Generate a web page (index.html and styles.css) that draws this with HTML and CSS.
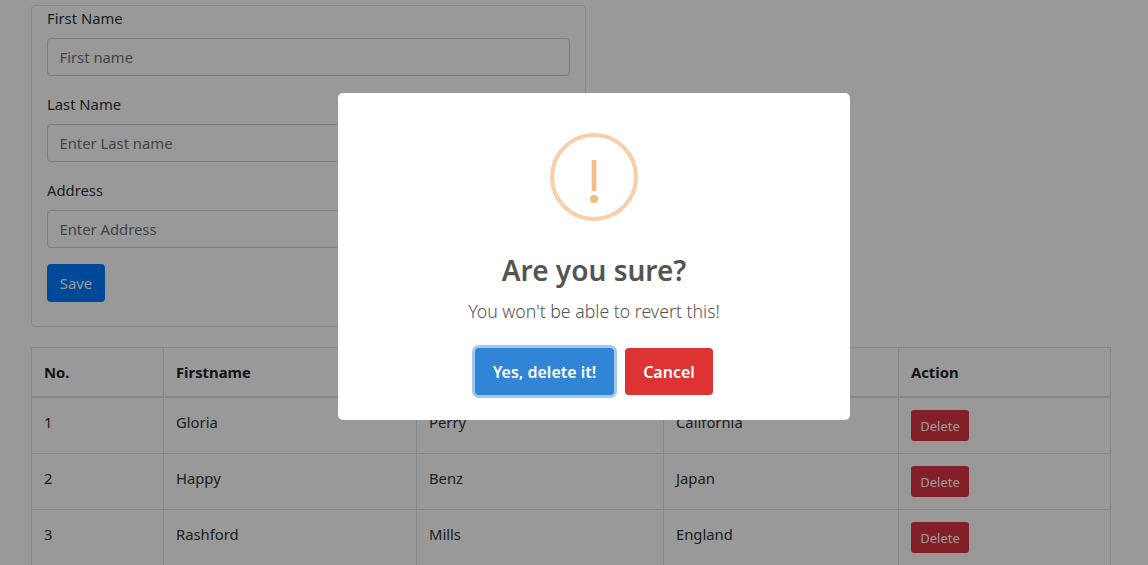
FILE: index.html
```html
<!DOCTYPE html>
<html lang="en">
<head>
<meta charset="utf-8">
<title>Users</title>
<link rel="stylesheet" href="styles.css">
</head>
<body>
<main class="page">
  <form class="card">
    <div class="field">
      <label class="field-label">First Name</label>
      <input class="field-input" placeholder="First name">
    </div>
    <div class="field">
      <label class="field-label">Last Name</label>
      <input class="field-input" placeholder="Enter Last name">
    </div>
    <div class="field">
      <label class="field-label">Address</label>
      <input class="field-input" placeholder="Enter Address">
    </div>
    <button type="button" class="btn-save">Save</button>
  </form>
  <table class="users">
    <colgroup>
      <col class="col-no"><col class="col-first"><col class="col-last"><col class="col-address"><col>
    </colgroup>
    <thead>
      <tr><th>No.</th><th>Firstname</th><th aria-label="Last name"></th><th aria-label="Address"></th><th>Action</th></tr>
    </thead>
    <tbody>
      <tr><td>1</td><td>Gloria</td><td>Perry</td><td>California</td><td><button type="button" class="btn-delete">Delete</button></td></tr>
      <tr><td>2</td><td>Happy</td><td>Benz</td><td>Japan</td><td><button type="button" class="btn-delete">Delete</button></td></tr>
      <tr><td>3</td><td>Rashford</td><td>Mills</td><td>England</td><td><button type="button" class="btn-delete">Delete</button></td></tr>
    </tbody>
  </table>
</main>
<div class="overlay">
  <div class="modal" role="dialog">
    <svg class="warn-icon" width="88" height="88" viewBox="0 0 88 88" aria-hidden="true">
      <circle cx="44" cy="44" r="42" fill="none" stroke="#facea8" stroke-width="4"/>
      <rect x="41.7" y="27" width="4.6" height="31" fill="#f8bb86"/>
      <circle cx="44" cy="66" r="4" fill="#f8bb86"/>
    </svg>
    <h2 class="modal-title">Are you sure?</h2>
    <p class="modal-text">You won't be able to revert this!</p>
    <div class="modal-actions">
      <button type="button" class="btn-confirm">Yes, delete it!</button>
      <button type="button" class="btn-cancel">Cancel</button>
    </div>
  </div>
</div>
</body>
</html>
```
FILE: styles.css
```css
* { box-sizing: border-box; }
html, body { height: 100%; overflow: hidden; }
body {
  margin: 0;
  background: #fff;
  color: #2f3438;
  font-family: "Noto Sans", "Open Sans", sans-serif;
  font-size: 14.8px;
  line-height: 24px;
}
.page { padding: 5px 37px 0 31px; }
.card {
  width: 555px;
  height: 322px;
  border: 1px solid #dee2e6;
  border-radius: 4px;
  padding: 0 15px;
}
.field { margin-bottom: 16px; }
.field-label { display: block; height: 24px; margin-bottom: 8px; }
.field-input {
  display: block;
  width: 100%;
  height: 38px;
  padding: 6px 12px 6px 11.5px;
  border: 1px solid #ced4da;
  border-radius: 4px;
  font: inherit;
  color: #212529;
  background: #fff;
}
.field-input::placeholder { color: #6c757d; opacity: 1; }
.btn-save {
  display: block;
  width: 58px;
  height: 38px;
  padding: 0;
  border: 0;
  border-radius: 4px;
  background: #007bff;
  color: #fff;
  font: inherit;
}
.users {
  width: 1080px;
  margin-top: 20px;
  border-collapse: collapse;
  table-layout: fixed;
}
.col-no { width: 132px; }
.col-first { width: 253px; }
.col-last { width: 247px; }
.col-address { width: 235px; }
.users th, .users td {
  border: 1px solid #dee2e6;
  padding: 12px;
  height: 49px;
  text-align: left;
  vertical-align: top;
}
.users th { font-weight: 700; color: #212529; border-bottom-width: 2px; }
.btn-delete {
  display: block;
  width: 58px;
  height: 31px;
  padding: 0;
  border: 0;
  border-radius: 3px;
  background: #dc3545;
  color: #fff;
  font: inherit;
  font-size: 13px;
}
.overlay {
  position: fixed;
  inset: 0;
  display: flex;
  justify-content: center;
  align-items: flex-start;
  padding: 93px 0 0 40px;
  background: rgba(0, 0, 0, .4);
}
.modal {
  width: 512px;
  height: 327px;
  padding-top: 40px;
  border-radius: 5px;
  background: #fff;
  display: flex;
  flex-direction: column;
  align-items: center;
  color: #545454;
}
.warn-icon { display: block; }
.modal-title { margin: 29px 0 0; font-size: 28px; line-height: 40px; font-weight: 600; }
.modal-text { margin: 9px 0 0; font-size: 17.7px; line-height: 24px; font-weight: 300; }
.modal-actions { display: flex; gap: 11px; margin-top: 25px; }
.btn-confirm, .btn-cancel {
  height: 47px;
  padding: 0;
  border: 0;
  border-radius: 4px;
  color: #fff;
  font: inherit;
  font-size: 16px;
  font-weight: 600;
}
.btn-confirm {
  width: 139px;
  background: #3085d6;
  box-shadow: 0 0 0 3px rgba(48, 133, 214, .45);
}
.btn-cancel { width: 88px; background: #dd3333; }
```
